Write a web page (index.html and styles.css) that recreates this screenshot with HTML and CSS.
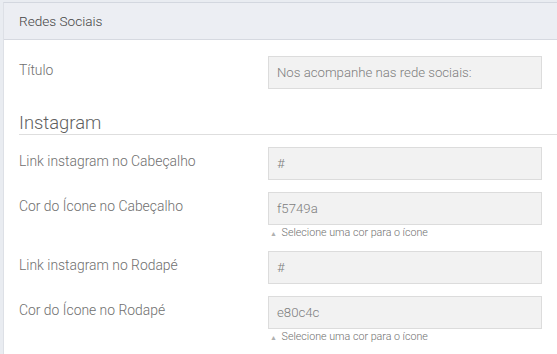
FILE: index.html
```html
<!DOCTYPE html>
<html>
<head>
<meta charset="utf-8">
<link rel="stylesheet" href="styles.css">
</head>
<body>

<div class="painel">
<div class="painel-topo">Redes Sociais</div>
<div class="painel-corpo">

<div class="linha">
<label class="rotulo">Título</label>
<div class="campo">
<input type="text" class="entrada" value="Nos acompanhe nas rede sociais:">
</div>
</div>

<div class="secao">Instagram</div>

<div class="linha">
<label class="rotulo">Link instagram no Cabeçalho</label>
<div class="campo">
<input type="text" class="entrada" value="#">
</div>
</div>

<div class="linha">
<label class="rotulo">Cor do Ícone no Cabeçalho</label>
<div class="campo">
<input type="text" class="entrada" value="f5749a">
<div class="ajuda"><span class="seta">▲</span> Selecione uma cor para o ícone</div>
</div>
</div>

<div class="linha">
<label class="rotulo">Link instagram no Rodapé</label>
<div class="campo">
<input type="text" class="entrada" value="#">
</div>
</div>

<div class="linha">
<label class="rotulo">Cor do Ícone no Rodapé</label>
<div class="campo">
<input type="text" class="entrada" value="e80c4c">
<div class="ajuda"><span class="seta">▲</span> Selecione uma cor para o ícone</div>
</div>
</div>

</div>
</div>

</body>
</html>
```

FILE: styles.css
```css
body {
margin: 0;
padding: 2px 0 0 3px;
background-color: #e9ecf1;
font-family: 'Roboto', 'Liberation Sans', sans-serif;
font-size: 13px;
overflow: hidden;
}
.painel {
background-color: #ffffff;
border-top: 1px solid #d3d7df;
border-left: 1px solid #dde0e6;
min-height: 360px;
}
.painel-topo {
height: 36px;
line-height: 36px;
padding-left: 15px;
background-color: #eceef3;
border-bottom: 1px solid #d6d9e0;
color: #444444;
font-size: 13.6px;
font-weight: 300;
}
.painel-corpo {
padding: 16px 0 0 15px;
}
.linha {
display: flex;
margin-bottom: 12px;
}
.rotulo {
width: 249px;
padding-top: 5px;
line-height: 18px;
font-size: 13.9px;
font-weight: 300;
color: #6f6f6f;
}
.campo {
width: 274px;
}
.entrada {
box-sizing: border-box;
width: 274px;
height: 33px;
padding: 0 8px;
border: 1px solid #dcdcdc;
background-color: #f2f2f2;
font-family: 'Roboto', 'Liberation Sans', sans-serif;
font-size: 13.2px;
font-weight: 300;
color: #7d7d7d;
}
.ajuda {
height: 14px;
line-height: 15px;
font-size: 10.7px;
font-weight: 300;
color: #6f6f6f;
padding-left: 2px;
}
.seta {
font-size: 7px;
color: #b0b0b0;
margin-right: 2px;
}
.secao {
margin-top: 24px;
margin-bottom: 12px;
font-size: 18.4px;
font-weight: 300;
line-height: 20px;
color: #5f5f5f;
border-bottom: 1px solid #dedede;
padding-bottom: 1px;
}
```
